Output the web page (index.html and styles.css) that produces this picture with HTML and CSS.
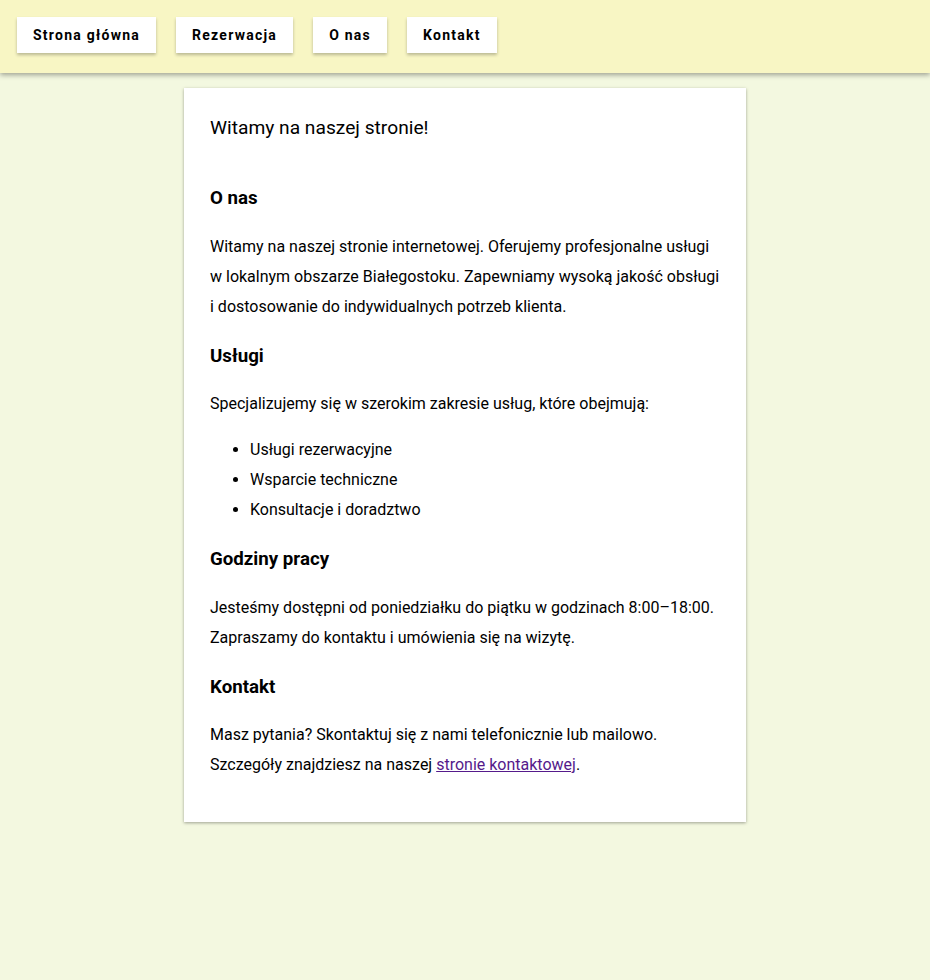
FILE: index.html
```html
<!DOCTYPE html>
<html lang="pl">
<head>
<meta charset="utf-8">
<title>Strona</title>
<link rel="stylesheet" href="styles.css">
</head>
<body>
<header class="topbar">
  <nav class="nav">
    <a class="nav-btn" href="#">Strona główna</a>
    <a class="nav-btn" href="#">Rezerwacja</a>
    <a class="nav-btn" href="#">O nas</a>
    <a class="nav-btn" href="#">Kontakt</a>
  </nav>
</header>
<main class="card">
  <h1 class="title">Witamy na naszej stronie!</h1>
  <h2>O nas</h2>
  <p>Witamy na naszej stronie internetowej. Oferujemy profesjonalne usługi w lokalnym obszarze Białegostoku. Zapewniamy wysoką jakość obsługi i dostosowanie do indywidualnych potrzeb klienta.</p>
  <h2>Usługi</h2>
  <p>Specjalizujemy się w szerokim zakresie usług, które obejmują:</p>
  <ul>
    <li>Usługi rezerwacyjne</li>
    <li>Wsparcie techniczne</li>
    <li>Konsultacje i doradztwo</li>
  </ul>
  <h2>Godziny pracy</h2>
  <p>Jesteśmy dostępni od poniedziałku do piątku w godzinach 8:00–18:00. Zapraszamy do kontaktu i umówienia się na wizytę.</p>
  <h2>Kontakt</h2>
  <p>Masz pytania? Skontaktuj się z nami telefonicznie lub mailowo. Szczegóły znajdziesz na naszej <a class="link" href="#">stronie kontaktowej</a>.</p>
</main>
</body>
</html>
```

FILE: styles.css
```css
* { box-sizing: border-box; }
html, body {
  margin: 0;
  padding: 0;
}
body {
  background: #f3f8e0;
  font-family: Roboto, "Noto Sans", sans-serif;
  color: #000;
  min-height: 980px;
}
.topbar {
  background: #f8f6c4;
  height: 73px;
  padding: 17px 17px 0;
  box-shadow: 0 2px 5px rgba(0, 0, 0, 0.35);
}
.nav {
  display: flex;
  gap: 20px;
}
.nav-btn {
  display: flex;
  align-items: center;
  height: 36px;
  padding: 0 16px;
  background: #fff;
  color: #000;
  text-decoration: none;
  font-weight: 700;
  font-size: 14px;
  letter-spacing: 1.25px;
  box-shadow: 0 2px 3px rgba(0, 0, 0, 0.25);
}
.card {
  width: 562px;
  margin: 15px auto 0;
  background: #fff;
  padding: 26px 26px 26px;
  box-shadow: 0 1px 3px rgba(0, 0, 0, 0.35);
}
.title {
  font-size: 19.2px;
  font-weight: 400;
  line-height: 24px;
  margin: 2px 0 0;
}
h2 {
  font-size: 18.72px;
  font-weight: 700;
  line-height: 24px;
  margin: 22px 0 21.5px;
}
.title + h2 { margin-top: 46px; }
p {
  font-size: 16px;
  line-height: 30px;
  margin: 16px 0;
}
ul {
  font-size: 16px;
  line-height: 30px;
  margin: 16px 0;
  padding-left: 40px;
}
.link { color: #551a8b; }
```
